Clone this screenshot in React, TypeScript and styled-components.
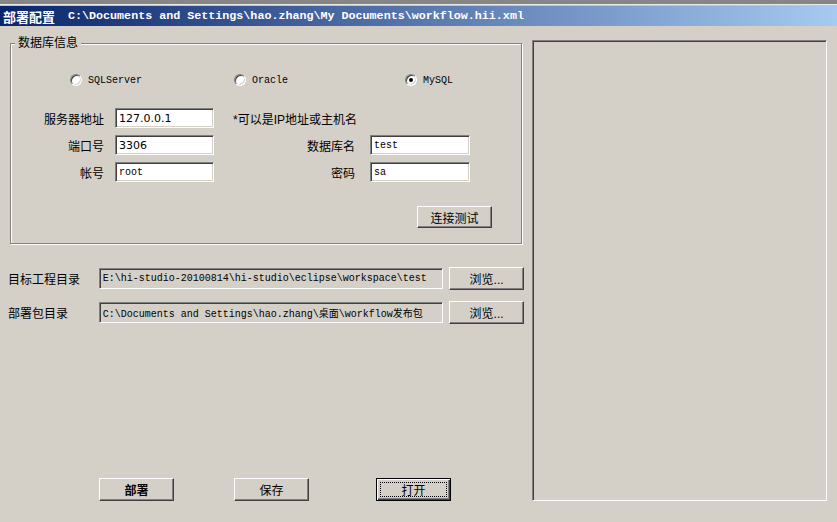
import React from 'react'
import styled, { createGlobalStyle, css } from 'styled-components'

const GlobalStyle = createGlobalStyle`
    *, *::before, *::after {
        box-sizing: border-box;
    }
    html, body {
        margin: 0;
        padding: 0;
        background: #d4d0c8;
    }
    body {
        width: 837px;
        height: 522px;
        overflow: hidden;
        font-family: "Liberation Sans", "Noto Sans CJK SC", sans-serif;
        font-size: 12px;
        color: #000;
    }
`

const mono = `"Liberation Mono", "Noto Sans CJK SC", monospace`
const cjk = `"Liberation Sans", "Noto Sans CJK SC", sans-serif`

const Window = styled.div`
    width: 837px;
    height: 522px;
    display: flex;
    flex-direction: column;
    background: #d4d0c8;
`

const TopStrip = styled.div`
    height: 6px;
    background: linear-gradient(#868686 0 4px, #e6e6e6 4px 5px, #c8c6c0 5px);
`

const TitleBar = styled.div`
    height: 20px;
    display: flex;
    align-items: center;
    padding-left: 3px;
    background: linear-gradient(to right, #0a246a, #a6caf0);
    color: #fff;
    font-weight: bold;
    white-space: nowrap;
`

const TitleName = styled.span`
    font-family: ${cjk};
    font-size: 13px;
    margin-right: 13px;
`

const TitlePath = styled.span`
    font-family: ${mono};
    font-size: 11.7px;
`

const Main = styled.div`
    display: flex;
    gap: 8px;
    height: 475px;
    padding: 14px 0 0 8px;
`

const LeftColumn = styled.div`
    width: 516px;
    display: flex;
    flex-direction: column;
`

const GroupBox = styled.div`
    position: relative;
    width: 512px;
    height: 201px;
    margin: 3px 0 0 2px;
    border: 1px solid #808080;
    box-shadow: inset 1px 1px 0 #fff, 1px 1px 0 #fff;
    display: flex;
    flex-direction: column;
    padding-top: 28px;
`

const Legend = styled.span`
    position: absolute;
    top: -8px;
    left: 4px;
    padding: 0 3px;
    line-height: 14px;
    background: #d4d0c8;
    font-family: ${cjk};
`

const RadioRow = styled.div`
    display: flex;
    height: 16px;
    padding-left: 59px;
`

const RadioItem = styled.label<{ $width?: number }>`
    display: flex;
    align-items: center;
    gap: 6px;
    width: ${(p) => (p.$width ? `${p.$width}px` : 'auto')};
    font-family: ${mono};
    font-size: 10px;
`

const RadioCircle = styled.span<{ $checked?: boolean }>`
    width: 12px;
    height: 12px;
    border-radius: 50%;
    background: #fff;
    border: 1px solid;
    border-color: #808080 #fff #fff #808080;
    box-shadow: inset 1px 1px 0 #404040, inset -1px -1px 0 #d4d0c8;
    display: flex;
    align-items: center;
    justify-content: center;

    &::after {
        content: '';
        width: 4px;
        height: 4px;
        border-radius: 50%;
        background: #000;
        display: ${(p) => (p.$checked ? 'block' : 'none')};
    }
`

const FormGrid = styled.div`
    display: grid;
    grid-template-columns: 104px 99px 156px 100px;
    grid-auto-rows: 20px;
    row-gap: 7px;
    margin-top: 20px;
`

const FieldLabel = styled.span<{ $pad: number }>`
    display: flex;
    align-items: center;
    justify-content: flex-end;
    padding-right: ${(p) => p.$pad}px;
    font-family: ${cjk};
`

const Note = styled.span`
    grid-column: 3 / span 2;
    display: flex;
    align-items: center;
    padding-left: 19px;
    font-family: ${cjk};
`

const sunken = css`
    border: 1px solid;
    border-color: #808080 #fff #fff #808080;
    box-shadow: inset 1px 1px 0 #404040, inset -1px -1px 0 #d4d0c8;
`

const TextField = styled.input<{ $mono?: boolean }>`
    ${sunken};
    width: 100%;
    height: 20px;
    margin: 0;
    padding: 0 2px 0 3px;
    background: #fff;
    color: #000;
    outline: none;
    font-family: ${(p) => (p.$mono ? mono : `"DejaVu Sans", "Liberation Sans", sans-serif`)};
    font-size: ${(p) => (p.$mono ? '10px' : '11px')};
`

const Button = styled.button<{ $default?: boolean; $bold?: boolean }>`
    width: 75px;
    height: 23px;
    margin: 0;
    padding: 0;
    background: #d4d0c8;
    color: #000;
    font-family: ${cjk};
    font-size: 12px;
    font-weight: ${(p) => (p.$bold ? 'bold' : 'normal')};
    border: 1px solid;
    border-color: #fff #404040 #404040 #fff;
    box-shadow: inset -1px -1px 0 #808080;

    ${(p) =>
        p.$default &&
        css`
            border-color: #000;
            box-shadow: inset 1px 1px 0 #fff, inset -1px -1px 0 #404040,
                inset -2px -2px 0 #808080;
            outline: 1px dotted #000;
            outline-offset: -5px;
        `}
`

const TestButton = styled(Button)`
    align-self: flex-end;
    height: 22px;
    margin: 24px 29px 0 0;
`

const PathRow = styled.div<{ $gap: number }>`
    display: flex;
    align-items: center;
    height: 23px;
    margin-top: ${(p) => p.$gap}px;
`

const PathLabel = styled.span`
    width: 91px;
    font-family: ${cjk};
`

const PathField = styled.input`
    ${sunken};
    width: 345px;
    height: 21px;
    margin: 0 6px 0 0;
    padding: 0 2px 0 3px;
    background: #d4d0c8;
    color: #000;
    outline: none;
    font-family: ${mono};
    font-size: 10px;
`

const ButtonBar = styled.div`
    margin-top: auto;
    display: grid;
    grid-template-columns: 135px 142px 75px;
    padding-left: 91px;
`

const SidePanel = styled.div`
    ${sunken};
    width: 295px;
    height: 461px;
    background: #d4d0c8;
`

function Radio({ label, checked, width }: { label: string; checked?: boolean; width?: number }) {
    return (
        <RadioItem $width={width}>
            <RadioCircle $checked={checked} />
            {label}
        </RadioItem>
    )
}

export default function App(): JSX.Element {
    return (
        <Window>
            <GlobalStyle />
            <TopStrip />
            <TitleBar>
                <TitleName>部署配置</TitleName>
                <TitlePath>{'C:\\Documents and Settings\\hao.zhang\\My Documents\\workflow.hii.xml'}</TitlePath>
            </TitleBar>
            <Main>
                <LeftColumn>
                    <GroupBox>
                        <Legend>数据库信息</Legend>
                        <RadioRow>
                            <Radio label="SQLServer" width={164} />
                            <Radio label="Oracle" width={171} />
                            <Radio label="MySQL" checked />
                        </RadioRow>
                        <FormGrid>
                            <FieldLabel $pad={11}>服务器地址</FieldLabel>
                            <TextField value="127.0.0.1" readOnly />
                            <Note>*可以是IP地址或主机名</Note>

                            <FieldLabel $pad={11}>端口号</FieldLabel>
                            <TextField value="3306" readOnly />
                            <FieldLabel $pad={15}>数据库名</FieldLabel>
                            <TextField value="test" $mono readOnly />

                            <FieldLabel $pad={11}>帐号</FieldLabel>
                            <TextField value="root" $mono readOnly />
                            <FieldLabel $pad={15}>密码</FieldLabel>
                            <TextField value="sa" $mono readOnly />
                        </FormGrid>
                        <TestButton>连接测试</TestButton>
                    </GroupBox>

                    <PathRow $gap={23}>
                        <PathLabel>目标工程目录</PathLabel>
                        <PathField value={'E:\\hi-studio-20100814\\hi-studio\\eclipse\\workspace\\test'} readOnly />
                        <Button>浏览...</Button>
                    </PathRow>
                    <PathRow $gap={11}>
                        <PathLabel>部署包目录</PathLabel>
                        <PathField value={'C:\\Documents and Settings\\hao.zhang\\桌面\\workflow发布包'} readOnly />
                        <Button>浏览...</Button>
                    </PathRow>

                    <ButtonBar>
                        <Button $bold>部署</Button>
                        <Button>保存</Button>
                        <Button $default>打开</Button>
                    </ButtonBar>
                </LeftColumn>
                <SidePanel />
            </Main>
        </Window>
    )
}
